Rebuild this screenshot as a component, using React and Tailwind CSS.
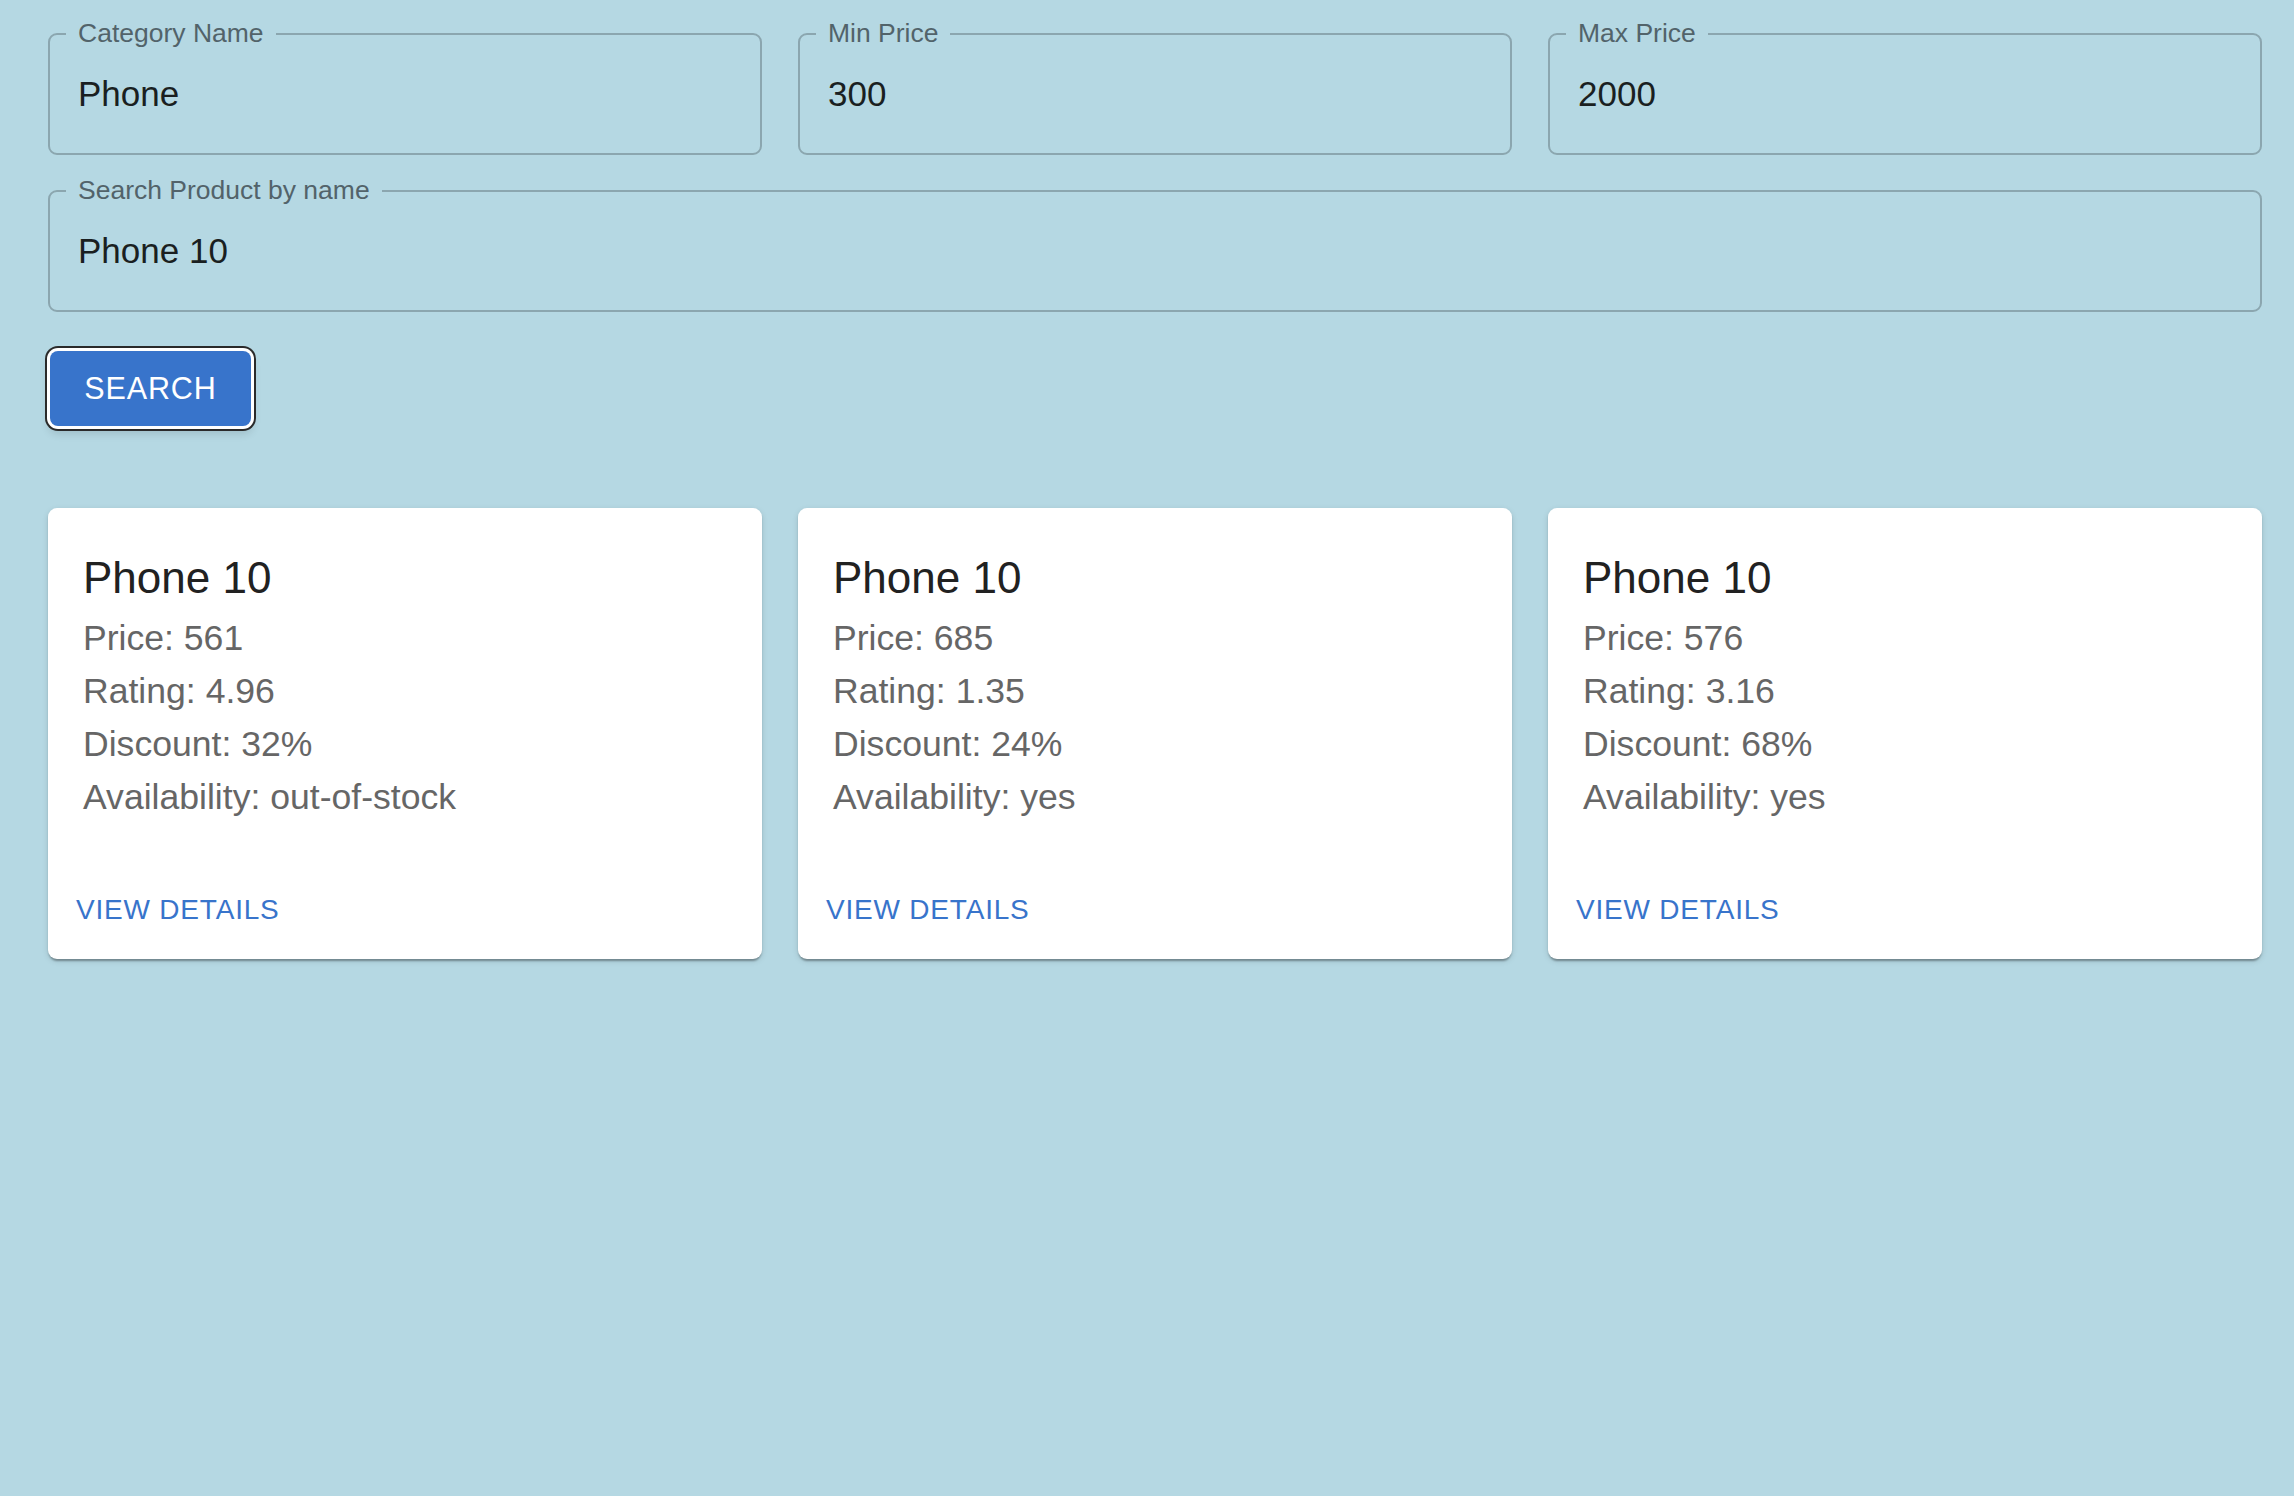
import React from 'react';

const filters = [
  { label: 'Category Name', value: 'Phone' },
  { label: 'Min Price', value: '300' },
  { label: 'Max Price', value: '2000' },
];

const products = [
  { name: 'Phone 10', price: 561, rating: 4.96, discount: 32, availability: 'out-of-stock' },
  { name: 'Phone 10', price: 685, rating: 1.35, discount: 24, availability: 'yes' },
  { name: 'Phone 10', price: 576, rating: 3.16, discount: 68, availability: 'yes' },
];

// Outlined text field with the label sitting on the top border
const OutlinedField = ({ label, value }) => (
  <div className="relative h-[122px] border-2 border-[#8ba6af] rounded-[9px] flex items-center pl-[28px] pr-[28px]">
    <span className="absolute left-[16px] top-[-15px] px-[12px] bg-[#b5d8e3] text-[26.5px] leading-none text-[#52636a]">
      {label}
    </span>
    <input
      type="text"
      defaultValue={value}
      className="w-full bg-transparent outline-none text-[35px] leading-[40px] text-[#1a1f21]"
    />
  </div>
);

const ProductCard = ({ product }) => (
  <div className="bg-white rounded-[9px] shadow-[0_4px_2px_-2px_rgba(0,0,0,0.2),0_2px_2px_0_rgba(0,0,0,0.14),0_2px_6px_0_rgba(0,0,0,0.12)]">
    <div className="px-[35px] pt-[35px] pb-[36px]">
      <h2 className="text-[44px] leading-[69px] text-[#212121]">{product.name}</h2>
      <div className="text-[35.6px] leading-[53px] text-[#666666]">
        <p>Price: {product.price}</p>
        <p>Rating: {product.rating}</p>
        <p>Discount: {product.discount}%</p>
        <p>Availability: {product.availability}</p>
      </div>
    </div>
    <div className="px-[17px] pt-[17px] pb-[16px]">
      <button className="h-[66px] px-[11px] flex items-center text-[28px] tracking-[0.8px] uppercase text-[#3874cb] rounded-[8px]">
        View Details
      </button>
    </div>
  </div>
);

export default function App() {
  return (
    <div className="min-h-screen bg-[#b5d8e3] font-['Liberation_Sans',Arial,sans-serif] pl-[48px] pr-[32px] pt-[33px] pb-[40px]">
      {/* Filters */}
      <div className="grid grid-cols-3 gap-[36px]">
        {filters.map((f) => (
          <OutlinedField key={f.label} label={f.label} value={f.value} />
        ))}
      </div>

      <div className="mt-[35px]">
        <OutlinedField label="Search Product by name" value="Phone 10" />
      </div>

      <button className="mt-[39px] ml-[2px] w-[201px] h-[75px] rounded-[8px] bg-[#3874cb] text-white text-[30.5px] font-medium tracking-[0.86px] uppercase flex items-center justify-center shadow-[0_0_0_3px_#ffffff,0_0_0_5px_#2a2a2a,0_6px_8px_2px_rgba(0,0,0,0.12)]">
        Search
      </button>

      {/* Results */}
      <div className="mt-[82px] grid grid-cols-3 gap-[36px]">
        {products.map((p, i) => (
          <ProductCard key={i} product={p} />
        ))}
      </div>
    </div>
  );
}
